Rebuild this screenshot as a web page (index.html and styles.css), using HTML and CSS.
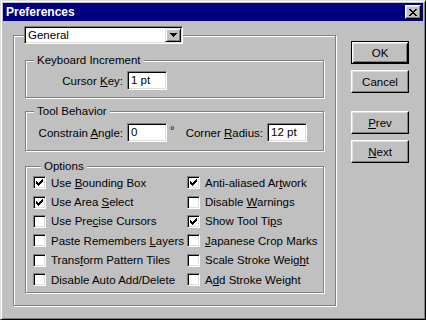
FILE: index.html
```html
<!DOCTYPE html>
<html>
<head>
<meta charset="utf-8">
<link rel="stylesheet" href="styles.css">
</head>
<body>
<div class="window">
  <div class="titlebar">
    <span class="title">Preferences</span>
    <span class="close">
      <svg width="8" height="7" viewBox="0 0 8 7" shape-rendering="crispEdges"><path d="M0 0h2v1h1v1h2v-1h1v-1h2v1h-1v1h-1v1h-1v1h1v1h1v1h1v1h-2v-1h-1v-1h-2v1h-1v1h-2v-1h1v-1h1v-1h1v-1h-1v-1h-1v-1h-1z" fill="#000"/></svg>
    </span>
  </div>
  <div class="body">
    <fieldset class="main">
      <legend class="main-legend">
        <div class="combo">
          <span class="combo-text">General</span>
          <span class="combo-btn"><svg width="7" height="4" viewBox="0 0 7 4" shape-rendering="crispEdges"><path d="M0 0h7v1h-1v1h-1v1h-1v1h-1v-1h-1v-1h-1v-1h-1z" fill="#000"/></svg></span>
        </div>
      </legend>

      <fieldset class="group ki">
        <legend>Keyboard Increment</legend>
        <div class="row">
          <span class="lbl">Cursor <u>K</u>ey:</span>
          <span class="input">1 pt</span>
        </div>
      </fieldset>

      <fieldset class="group tb">
        <legend>Tool Behavior</legend>
        <div class="row">
          <span class="lbl">Constrain <u>A</u>ngle:</span>
          <span class="input">0</span>
          <span class="deg">°</span>
          <span class="lbl2">Corner <u>R</u>adius:</span>
          <span class="input">12 pt</span>
        </div>
      </fieldset>

      <fieldset class="group opts">
        <legend>Options</legend>
        <div class="grid">
          <div class="opt"><span class="cb on"></span><span>Use <u>B</u>ounding Box</span></div>
          <div class="opt"><span class="cb on"></span><span>Anti-aliased Ar<u>t</u>work</span></div>
          <div class="opt"><span class="cb on"></span><span>Use Area <u>S</u>elect</span></div>
          <div class="opt"><span class="cb"></span><span>Disable <u>W</u>arnings</span></div>
          <div class="opt"><span class="cb"></span><span>Use Pre<u>c</u>ise Cursors</span></div>
          <div class="opt"><span class="cb on"></span><span>Show Tool Ti<u>p</u>s</span></div>
          <div class="opt"><span class="cb"></span><span>Paste Remembers <u>L</u>ayers</span></div>
          <div class="opt"><span class="cb"></span><span><u>J</u>apanese Crop Marks</span></div>
          <div class="opt"><span class="cb"></span><span>Trans<u>f</u>orm Pattern Tiles</span></div>
          <div class="opt"><span class="cb"></span><span>Scale Stroke Weig<u>h</u>t</span></div>
          <div class="opt"><span class="cb"></span><span>Disable Auto Add/Delete</span></div>
          <div class="opt"><span class="cb"></span><span>A<u>d</u>d Stroke Weight</span></div>
        </div>
      </fieldset>
    </fieldset>

    <div class="buttons">
      <span class="btn default">OK</span>
      <span class="btn">Cancel</span>
      <span class="btn gap"><u>P</u>rev</span>
      <span class="btn"><u>N</u>ext</span>
    </div>
  </div>
</div>
</body>
</html>
```

FILE: styles.css
```css
html, body {
  margin: 0;
  padding: 0;
  background: #c0c0c0;
}
body {
  font-family: "Liberation Sans", Arial, sans-serif;
  font-size: 11.5px;
  color: #000;
}
u {
  text-decoration: underline;
  text-underline-offset: 1px;
}
.window {
  box-sizing: border-box;
  width: 426px;
  height: 320px;
  background: #c0c0c0;
  border: 1px solid;
  border-color: #dfdfdf #000 #000 #dfdfdf;
  box-shadow: inset 1px 1px 0 #fff, inset -1px -1px 0 #808080;
  padding: 2px;
  display: flex;
  flex-direction: column;
}
.titlebar {
  height: 18px;
  background: #000080;
  display: flex;
  align-items: center;
  justify-content: space-between;
  padding: 0 2px 0 3px;
}
.title {
  color: #fff;
  font-weight: bold;
  font-size: 12px;
  line-height: 18px;
}
.close {
  box-sizing: border-box;
  width: 16px;
  height: 14px;
  background: #c0c0c0;
  border: 1px solid;
  border-color: #fff #000 #000 #fff;
  box-shadow: inset -1px -1px 0 #808080, inset 1px 1px 0 #dfdfdf;
  display: flex;
  align-items: center;
  justify-content: center;
  padding-right: 1px;
}
.close svg { display: block; }

.body {
  display: flex;
  align-items: flex-start;
  padding: 5px 0 0 10px;
}

fieldset {
  margin: 0;
  padding: 0;
  min-inline-size: 0;
  border: 1px solid #808080;
  box-shadow: inset 1px 1px 0 #fff, 1px 1px 0 #fff;
}
.main {
  box-sizing: border-box;
  width: 323px;
  height: 280px;
  padding: 0 11px;
}
.main-legend {
  padding: 0;
  margin-left: -1px;
}
.combo {
  box-sizing: border-box;
  width: 159px;
  height: 18px;
  background: #fff;
  border: 1px solid;
  border-color: #808080 #fff #fff #808080;
  box-shadow: inset 1px 1px 0 #000, inset -1px -1px 0 #dfdfdf;
  display: flex;
  align-items: center;
  padding: 1px 1px 1px 3px;
}
.combo-text {
  flex: 1;
  line-height: 14px;
}
.combo-btn {
  box-sizing: border-box;
  width: 16px;
  height: 14px;
  background: #c0c0c0;
  border: 1px solid;
  border-color: #dfdfdf #000 #000 #dfdfdf;
  box-shadow: inset 1px 1px 0 #fff, inset -1px -1px 0 #808080;
  display: flex;
  align-items: center;
  justify-content: center;
}
.combo-btn svg { display: block; }

.group legend {
  margin-left: 8px;
  padding: 0 3px;
  line-height: 14px;
  background: #c0c0c0;
}
.ki {
  margin-top: 9px;
  padding: 4px 0 7px;
}
.tb {
  margin-top: 6px;
  padding: 5px 0 8px;
}
.opts {
  margin-top: 8px;
  padding: 0 0 3px 7px;
}
.row {
  display: flex;
  align-items: center;
  height: 19px;
}
.lbl {
  width: 97px;
  margin-right: 4px;
  text-align: right;
  white-space: nowrap;
}
.lbl2 {
  width: 78px;
  margin-right: 4px;
  text-align: right;
  white-space: nowrap;
}
.deg {
  width: 15px;
  margin-left: 3px;
  align-self: flex-start;
  line-height: 14px;
}
.input {
  box-sizing: border-box;
  width: 40px;
  height: 19px;
  background: #fff;
  border: 1px solid;
  border-color: #808080 #fff #fff #808080;
  box-shadow: inset 1px 1px 0 #000, inset -1px -1px 0 #dfdfdf;
  padding: 0 2px 0 3px;
  line-height: 17px;
  white-space: nowrap;
}

.grid {
  display: grid;
  grid-template-columns: 154px 1fr;
  grid-auto-rows: 19.4px;
  padding-top: 0;
}
.opt {
  display: flex;
  align-items: center;
  white-space: nowrap;
}
.cb {
  box-sizing: border-box;
  width: 13px;
  height: 13px;
  flex: none;
  margin-right: 5px;
  background: #fff;
  border: 1px solid;
  border-color: #808080 #fff #fff #808080;
  box-shadow: inset 1px 1px 0 #000, inset -1px -1px 0 #dfdfdf;
}
.cb.on {
  background: #fff url("data:image/svg+xml,%3Csvg xmlns='http://www.w3.org/2000/svg' width='7' height='7' shape-rendering='crispEdges'%3E%3Cpath d='M6 0h1v3h-1v1h-1v1h-1v1h-1v1h-1v-1h-1v-1h-1v-3h1v1h1v1h1v-1h1v-1h1z' fill='%23000'/%3E%3C/svg%3E") no-repeat 2px 2px;
}

.buttons {
  display: flex;
  flex-direction: column;
  margin-left: 15px;
  padding-top: 15px;
  gap: 6px;
}
.btn {
  box-sizing: border-box;
  width: 58px;
  height: 23px;
  display: flex;
  align-items: center;
  justify-content: center;
  border: 1px solid;
  border-color: #fff #000 #000 #fff;
  box-shadow: inset -1px -1px 0 #808080, inset 1px 1px 0 #dfdfdf;
}
.btn.default {
  border-color: #000;
  box-shadow: inset 1px 1px 0 #fff, inset -1px -1px 0 #000, inset 2px 2px 0 #dfdfdf, inset -2px -2px 0 #808080;
}
.btn.gap {
  margin-top: 12px;
}
```
